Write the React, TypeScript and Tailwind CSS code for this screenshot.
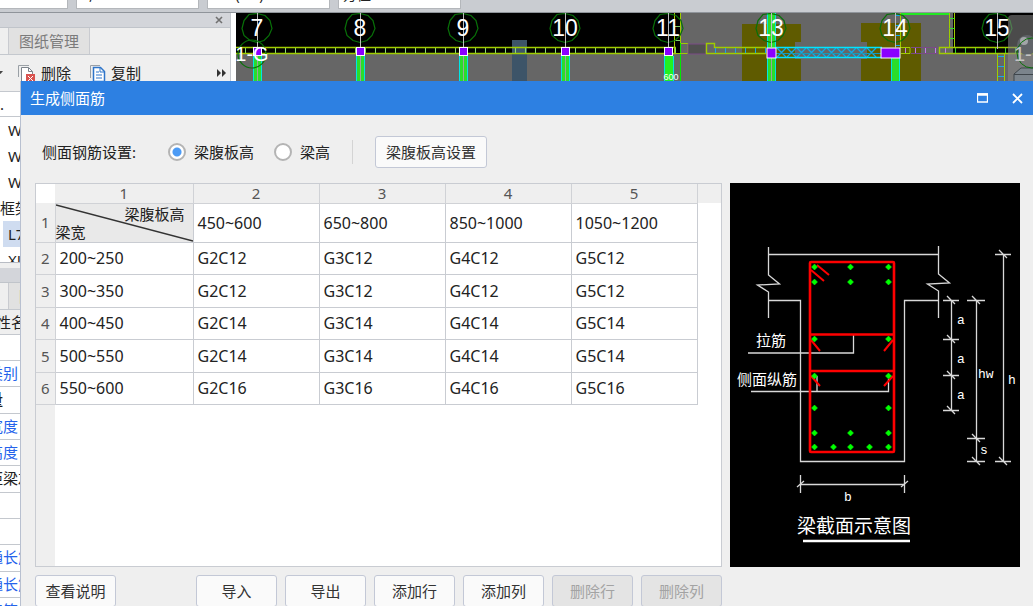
import { useState } from "react";

const ranges = ["450~600", "650~800", "850~1000", "1050~1200"];

const rows = [
  { width: "200~250", cells: ["G2C12", "G3C12", "G4C12", "G5C12"] },
  { width: "300~350", cells: ["G2C12", "G3C12", "G4C12", "G5C12"] },
  { width: "400~450", cells: ["G2C14", "G3C14", "G4C14", "G5C14"] },
  { width: "500~550", cells: ["G2C14", "G3C14", "G4C14", "G5C14"] },
  { width: "550~600", cells: ["G2C16", "G3C16", "G4C16", "G5C16"] },
];

const actions = [
  { label: "导入", disabled: false },
  { label: "导出", disabled: false },
  { label: "添加行", disabled: false },
  { label: "添加列", disabled: false },
  { label: "删除行", disabled: true },
  { label: "删除列", disabled: true },
];

const properties = [
  { name: "", style: "" },
  { name: "类别", style: "text-[#2563eb]" },
  { name: "量", style: "font-bold" },
  { name: "宽度", style: "text-[#2563eb]" },
  { name: "高度", style: "text-[#2563eb]" },
  { name: "距梁左", style: "" },
  { name: "", style: "" },
  { name: "", style: "" },
  { name: "通长筋", style: "text-[#2563eb]" },
  { name: "通长筋", style: "text-[#2563eb]" },
  { name: "选筋", style: "text-[#2563eb]" },
];

function TopBar() {
  return (
    <div className="flex h-[13px] shrink-0 items-start gap-2 overflow-hidden border-b border-[#8f949a] bg-[#c9ccd1]">
      <span className="h-[9px] w-[68px] border-r border-b border-[#b4b7bb] bg-white" />
      {["0,0", "LFC(OA)", "方值:"].map((value) => (
        <span
          key={value}
          className="flex h-[9px] w-[123px] items-end overflow-hidden border-x border-b border-[#b4b7bb] bg-white"
        >
          <input
            aria-label={value}
            defaultValue={value}
            className="h-6 w-full shrink-0 px-1 pb-1 text-[14px] leading-5 outline-none"
          />
        </span>
      ))}
    </div>
  );
}

function SidePanel() {
  return (
    <aside className="w-[231px] shrink-0 overflow-hidden border-r border-[#c4c8ce] bg-[#efefef]">
      <div className="flex h-[15px] items-center justify-end border-b border-[#c0c4ca] bg-[#d3d5da] pr-[7px]">
        <button aria-label="关闭面板" className="text-[#707070]">
          <svg width="8" height="8" viewBox="0 0 8 8">
            <path d="M1 1l6 6M7 1l-6 6" stroke="currentColor" strokeWidth="1.6" />
          </svg>
        </button>
      </div>
      <div className="flex h-[27px] border-b border-[#c4c8ce] pl-2">
        <button className="border-x border-[#c9cbd0] bg-[#e1e1e1] px-[10px] text-[#7b7b7b]">
          图纸管理
        </button>
      </div>
      <div className="flex h-[37px] items-center border-b border-[#c4c8ce] pr-1">
        <svg width="17" height="8" viewBox="0 0 17 8" className="shrink-0">
          <path d="M-2 2h5l-2.500 3z" fill="#444" />
        </svg>
        <button className="flex items-center gap-1">
          <svg width="20" height="20" viewBox="0 0 20 20" fill="none">
            <path d="M1.500 14V2.500H12" stroke="#9aa0a6" />
            <path d="M4.500 4.500h7l4 4v10h-11z" fill="#fff" stroke="#7d848c" />
            <path d="M11.500 4.500v4h4" stroke="#7d848c" />
            <rect x="9" y="11" width="9" height="9" fill="#d9534f" />
            <path d="M11 13l5 5M16 13l-5 5" stroke="#fff" />
          </svg>
          删除
        </button>
        <button className="ml-[18px] flex items-center gap-1">
          <svg width="18" height="20" viewBox="0 0 18 20" fill="none">
            <path d="M1.500 15V2.500H11" stroke="#9aa0a6" />
            <path
              d="M4.500 4.500h7l4 4v10h-11z"
              fill="#fff"
              stroke="#2f75c9"
              strokeWidth="1.500"
            />
            <path d="M11 4.500v4.500h4.500M7 9h3M7 12h6M7 15h6" stroke="#2f75c9" />
          </svg>
          复制
        </button>
        <svg width="9" height="8" viewBox="0 0 9 8" className="ml-auto">
          <path d="M0 0l4 4-4 4zM5 0l4 4-4 4z" fill="#333" />
        </svg>
      </div>

      <ul className="h-[171px] overflow-hidden border-b border-[#b8bcc4] bg-white">
        <li className="h-[25px] border-b border-[#c4c8ce] leading-6">.</li>
        <li className="h-[26px] pl-2 leading-[26px]">W</li>
        <li className="h-[26px] pl-2 leading-[26px]">W</li>
        <li className="h-[26px] pl-2 leading-[26px]">W</li>
        <li className="h-[26px] leading-[26px]">框架</li>
        <li className="ml-[3px] h-[26px] bg-[#cfdcf0] pl-[5px] leading-[26px]">L7</li>
        <li className="h-[26px] pl-2 leading-[26px]">XL</li>
      </ul>
      <div className="mt-[5px] h-[15px] border-b border-[#c0c4ca] bg-[#d3d5da]" />
      <div className="flex h-[27px] border-b border-[#c4c8ce] pl-2">
        <button className="border-x border-[#c9cbd0] bg-[#e1e1e1] px-[10px] text-[#b5762f]">
          图
        </button>
      </div>
      <div className="h-[25px] border-b border-[#c4c8ce] leading-6">
        <span className="-ml-1">性名</span>
      </div>
      <ul className="bg-white">
        {properties.map((p, i) => (
          <li
            key={i}
            className="h-[26px] border-b border-[#c4c8ce] leading-[25px] nth-[3n]:h-[27px]"
          >
            <span className={`-ml-3 ${p.style}`}>{p.name}</span>
          </li>
        ))}
      </ul>
    </aside>
  );
}

function AxisBubble({ x, label }: { x: number; label: string }) {
  return (
    <g>
      <path
        d={`M${x} 13.500l8 2 5 5 2 8-3 7-5 5-7 2-7-2-6-5-2-7 2-8 5-6z`}
        fill="none"
        stroke="#087008"
        strokeWidth="1.200"
      />
      <path d={`M${x + 0.5} 13v36`} stroke="#bdbdbd" />
      <text x={x} y="36" textAnchor="middle" fontSize="23" fill="#fff">
        {label}
      </text>
    </g>
  );
}

function Column({ x }: { x: number }) {
  return (
    <g>
      <rect x={x - 4} y="56" width="9" height="30" fill="#2bdc2b" />
      <path d={`M${x - 3.5} 56v30M${x + 4.5} 56v30`} stroke="#00e5e5" />
      <path d={`M${x + 0.5} 56v30`} stroke="#9aa59a" />
      <rect x={x - 3.5} y="47.500" width="8" height="8" fill="#8a00ff" stroke="#fff" />
    </g>
  );
}

function PlanCanvas() {
  return (
    <svg
      className="h-[68px] min-w-0 flex-1 bg-[#666]"
      viewBox="236 13 797 68"
      preserveAspectRatio="xMinYMin slice"
      fontFamily='"Liberation Sans", sans-serif'
    >
      <rect x="236" y="13" width="444" height="40" fill="#000" />
      <rect x="953" y="13" width="80" height="40" fill="#000" />
      <rect x="512" y="40" width="15" height="41" fill="#3d5468" />
      <path
        d="M742 24h59v18h-6v17h6v22h-59zM861 23h60v58h-60V59h6V42h-6z"
        fill="#5f5b00"
      />
      <path
        d="M245 50.500H676"
        stroke="#86e070"
        strokeWidth="5"
        strokeDasharray="1 9"
      />
      <path d="M236 47.500H676M236 53.500H676" stroke="#a0cc00" strokeWidth="1.400" />

      <path d="M674.500 13v40M680.500 13v30" stroke="#a0cc00" />
      <path d="M675 26.500h5M675 40.500h5" stroke="#7fd06a" />
      <path d="M680.500 43v38" stroke="#00e800" />
      <path d="M681 43.500h7v10h-16" fill="none" stroke="#a0cc00" />
      <rect x="688" y="44" width="18" height="10" fill="#505050" stroke="#7a4a86" />
      <path
        d="M766 53.500H706.500V43.500h8v4H766"
        fill="none"
        stroke="#a0cc00"
        strokeWidth="1.400"
      />
      <path
        d="M715 50.500H766"
        stroke="#12a8e8"
        strokeWidth="5"
        strokeDasharray="1 9"
      />

      {Array.from({ length: 10 }, (_, i) => (
        <path
          key={i}
          d={`M${777 + i * 10} 48l9 9M${786 + i * 10} 48l-9 9`}
          stroke="#12a8e8"
          strokeWidth="1.300"
        />
      ))}
      <path d="M776 53.500H882" stroke="#159ab8" />
      <path d="M776 47.500H882M776 57.500H882" stroke="#00e5ff" strokeWidth="1.400" />
      <rect x="767" y="13" width="9" height="68" fill="#2bdc2b" />
      <path d="M767.500 13v68M775.500 13v68" stroke="#00e5e5" />
      <path d="M771.500 13v68" stroke="#9aa59a" />
      <rect x="767" y="48" width="9" height="10" fill="#8a00ff" stroke="#fff" />
      <path d="M900.500 13v35" stroke="#a0cc00" />
      <path d="M898 15v32" stroke="#12a8e8" strokeDasharray="1 9" strokeWidth="4" />
      <rect x="891" y="58" width="9" height="23" fill="#2bdc2b" />
      <path d="M891.500 58v23M899.500 58v23" stroke="#00e5e5" />
      <rect x="881" y="48" width="19" height="10" fill="#8a00ff" stroke="#fff" />
      <path d="M901 14h49" stroke="#22e822" strokeWidth="2" />
      <path d="M949.500 13v34M954.500 13v34" stroke="#a0cc00" />
      <path d="M952 18v30" stroke="#2bdc2b" strokeDasharray="1 9" strokeWidth="5" />
      <path d="M901 47.500h9v6h-9" fill="none" stroke="#a0cc00" />
      <path d="M911 47.500h27M911 53.500h27" stroke="#7a4a86" />
      <path d="M905 50.500h42" stroke="#c07af0" strokeWidth="5" strokeDasharray="1 9" />
      <path d="M955 50.500h78" stroke="#2bdc2b" strokeWidth="5" strokeDasharray="1 9" />
      <path
        d="M1033 47.500H939.500v6H1033"
        fill="none"
        stroke="#a0cc00"
        strokeWidth="1.400"
      />
      <path d="M997.500 54v27M1004.500 54v27" stroke="#a0cc00" />
      <path d="M998 56.500h6M998 66.500h6M998 76.500h6" stroke="#12a8e8" />

      <AxisBubble x={257} label="7" />
      <AxisBubble x={360} label="8" />
      <AxisBubble x={463} label="9" />
      <AxisBubble x={565} label="10" />
      <AxisBubble x={668} label="11" />
      <AxisBubble x={771} label="13" />
      <AxisBubble x={895} label="14" />
      <AxisBubble x={997} label="15" />
      <Column x={257} />
      <Column x={360} />
      <Column x={463} />
      <Column x={565} />
      <rect x="664" y="56" width="10" height="30" fill="#22f022" />
      <path d="M664.500 56v30M673.500 56v30" stroke="#00e5e5" />
      <rect x="664.500" y="47.500" width="8" height="8" fill="#8a00ff" stroke="#fff" />
      <circle cx="252" cy="54" r="14" fill="none" stroke="#087008" strokeWidth="1.200" />
      <text x="252" y="61" textAnchor="middle" fontSize="20" fill="#fff">
        1-G
      </text>
      <text x="671" y="80" textAnchor="middle" fontSize="9" fill="#fff">
        600
      </text>

      <rect x="1008" y="15" width="40" height="70" rx="4" fill="#888" fillOpacity="0.55" />
      <circle cx="1027" cy="45" r="10" fill="#606468" />
      <circle cx="1024" cy="41" r="4" fill="#a2a5a8" />
      <path d="M1014 74l7-6h14v16h-21z" fill="#7b848c" stroke="#3f464c" />
      <path d="M1014 74.500h20" stroke="#3f464c" />
      <circle cx="1032" cy="53" r="15" fill="none" stroke="#087008" />
      <text x="1014" y="61" fontSize="20" fill="#c4c4c4">
        1-
      </text>
    </svg>
  );
}

const rebars = [
  [814, 267], [850, 267], [888, 267],
  [814, 282], [850, 282], [888, 282],
  [814, 339], [888, 339],
  [814, 376], [888, 376],
  [814, 408], [888, 408],
  [814, 433], [850, 433], [888, 433],
  [814, 447], [833, 447], [850, 447], [869, 447], [888, 447],
];

// dimension ticks: x, y, half width
const ticks = [
  [1003, 254, 8],
  [951, 300, 8], [951, 339, 8], [951, 375, 8], [951, 410, 8],
  [976, 300, 9], [976, 438, 9], [976, 461, 9],
  [1003, 461, 8],
];

function SectionDiagram() {
  return (
    <svg
      role="img"
      aria-label="梁截面示意图"
      className="h-[384px] w-[290px] shrink-0 bg-black"
      viewBox="730 183 290 384"
      fontFamily='"Noto Sans CJK SC", sans-serif'
      fill="#fff"
    >
      <g fill="none" stroke="#d8d8d8" strokeWidth="1.300">
        <path d="M768 254.500H938" />
        <path d="M768.500 247v28l11 9-22 1 11 7v26" />
        <path d="M938.500 246v28l11 9-22 1 11 7v27" />
        <path d="M768 300.500h32.500V461.500H904.500V300.500H938" />
        <path d="M748 353H853.500V335" />
        <path d="M751 391.500H888.500V379M817 391.500V376" />
        <path d="M951.500 300V410M976.500 300V461M1003.500 254V461" />
        <path d="M800.500 475v18M904.500 475v18M800 484.500H904" />
        <path d="M797 487l7-6M901 487l7-6" />
        {ticks.map(([x, y, w]) => (
          <path key={`${x}-${y}`} d={`M${x - w} ${y + 0.5}h${w * 2}M${x - 4} ${y - 4}l8 8`} />
        ))}
      </g>
      <g fill="none" stroke="#f00" strokeWidth="2.600">
        <rect x="810" y="262" width="84" height="190" rx="1" />
        <path d="M810 334.500h84M810 371h84" />
        <path
          d="M817 265l12 10M811 270l13 11M811 340l9 11M893 340l-9 11M811 376l9 10M893 376l-9 10"
          strokeWidth="2"
        />
      </g>
      {rebars.map(([x, y]) => (
        <path key={`${x}-${y}`} d={`M${x + 0.5} ${y - 3}l3 3-3 3-3-3z`} fill="#0f0" stroke="#0f0" strokeWidth="0.500" />
      ))}
      <text x="756" y="346" fontSize="15">拉筋</text>
      <text x="737" y="385" fontSize="15">侧面纵筋</text>
      <g fontFamily='"Liberation Mono", monospace' fontSize="13">
        <text x="957" y="324">a</text>
        <text x="957" y="363">a</text>
        <text x="957" y="399">a</text>
        <text x="978" y="378">hw</text>
        <text x="1008" y="384">h</text>
        <text x="980" y="454">s</text>
        <text x="844" y="501">b</text>
      </g>
      <text x="797" y="533" fontSize="19">梁截面示意图</text>
      <path d="M803 541h107" stroke="#fff" strokeWidth="2.400" />
    </svg>
  );
}

function RebarTable() {
  return (
    <div className="flex min-h-0 flex-1 flex-col border border-[#c9ccd2] bg-white">
      <table className="w-full table-fixed border-collapse text-left text-[16px] text-[#222]">
        <colgroup>
          <col className="w-[19px]" />
          <col className="w-[138px]" />
          <col />
          <col />
          <col />
          <col />
          <col className="w-6" />
        </colgroup>
        <thead>
          <tr className="h-[19px] bg-[#efefef] text-center text-[15px] leading-[18px] text-[#555]">
            <td className="bg-white p-0" />
            {[1, 2, 3, 4, 5].map((n) => (
              <th
                key={n}
                scope="col"
                className="border-r border-b border-[#d0d2d6] p-0 font-normal"
              >
                {n}
              </th>
            ))}
            <td />
          </tr>
        </thead>
        <tbody>
          <tr className="h-[39px]">
            <th className="border-r border-b border-[#d0d2d6] bg-[#efefef] p-0 text-center text-[15px] font-normal text-[#555]">
              1
            </th>
            <td className="relative border-r border-b border-[#c9ccd2] bg-[#e9e9e9] p-0 text-[15px] leading-[18px]">
              <svg
                className="absolute inset-0 h-full w-full"
                viewBox="0 0 138 39"
                preserveAspectRatio="none"
              >
                <path d="M0 1L138 38" stroke="#333" strokeWidth="1.300" />
              </svg>
              <span className="relative block pr-2 text-right">梁腹板高</span>
              <span className="relative block">梁宽</span>
            </td>
            {ranges.map((r) => (
              <td key={r} className="border-r border-b border-[#c9ccd2] px-1 py-0">
                {r}
              </td>
            ))}
            <td />
          </tr>
          {rows.map((row, i) => (
            <tr key={row.width} className="h-[33px] even:h-8">
              <th className="border-r border-b border-[#d0d2d6] bg-[#efefef] p-0 text-center text-[15px] font-normal text-[#555]">
                {i + 2}
              </th>
              <td className="border-r border-b border-[#c9ccd2] px-1 py-0">{row.width}</td>
              {row.cells.map((cell) => (
                <td key={cell} className="border-r border-b border-[#c9ccd2] px-1 py-0">
                  {cell}
                </td>
              ))}
              <td />
            </tr>
          ))}
        </tbody>
      </table>
      <div className="w-[19px] flex-1 bg-[#efefef]" />
    </div>
  );
}

const buttonClass =
  "h-8 rounded-[3px] border border-[#c3c8d6] bg-[#fafafa] text-[#333] disabled:bg-[#e4e4e4] disabled:text-[#a3a3a3]";

function RebarDialog() {
  const [mode, setMode] = useState("web");

  const radioClass =
    "size-[18px] appearance-none rounded-full border-2 border-[#b4b4b4] bg-white checked:bg-[radial-gradient(circle,#4c9bf5_4px,#fff_5px)]";

  return (
    <section
      role="dialog"
      aria-label="生成侧面筋"
      className="absolute top-[81px] right-0 -bottom-px left-5 flex flex-col border-l border-[#b8c0d0] bg-[#efefef]"
    >
      <header className="flex h-[34px] shrink-0 items-center bg-[#2d80e2] pr-[10px] pl-[9px] text-white">
        <h1>生成侧面筋</h1>
        <button aria-label="最大化" className="ml-auto">
          <svg width="11" height="10" viewBox="0 0 11 10" fill="none" stroke="#fff">
            <path d="M.5 1h10v8H.5z" strokeWidth="1.300" />
            <path d="M0 1.500h11" strokeWidth="2.500" />
          </svg>
        </button>
        <button aria-label="关闭" className="ml-6">
          <svg width="11" height="11" viewBox="0 0 11 11" stroke="#fff" strokeWidth="1.800">
            <path d="M1 1l9 9M10 1l-9 9" />
          </svg>
        </button>
      </header>

      <div className="flex min-h-0 flex-1 flex-col pt-5 pr-[13px] pl-[14px]">
        <div className="flex h-[34px] shrink-0 items-center pl-[7px]">
          <span className="w-[126px]">侧面钢筋设置:</span>
          <label className="flex items-center gap-2">
            <input
              type="radio"
              name="mode"
              className={radioClass}
              checked={mode === "web"}
              onChange={() => setMode("web")}
            />
            梁腹板高
          </label>
          <label className="ml-5 flex items-center gap-2">
            <input
              type="radio"
              name="mode"
              className={radioClass}
              checked={mode === "beam"}
              onChange={() => setMode("beam")}
            />
            梁高
          </label>
          <span className="mx-[22px] h-6 w-px bg-[#d4d4d4]" />
          <button className={`${buttonClass} px-[10px]`}>梁腹板高设置</button>
        </div>

        <div className="mt-[14px] flex min-h-0 flex-1 gap-2">
          <div className="flex min-w-0 flex-1 flex-col gap-2">
            <RebarTable />
            <div className="flex shrink-0 gap-2">
              <button className={`${buttonClass} mr-auto w-[81px]`}>查看说明</button>
              {actions.map((a) => (
                <button
                  key={a.label}
                  disabled={a.disabled}
                  className={`${buttonClass} w-[81px]`}
                >
                  {a.label}
                </button>
              ))}
            </div>
          </div>
          <SectionDiagram />
        </div>
      </div>
    </section>
  );
}

export default function App() {
  return (
    <div className="relative flex h-screen flex-col overflow-hidden bg-white font-['Noto_Sans','Noto_Sans_CJK_SC',sans-serif] text-[15px] leading-5 text-[#222]">
      <TopBar />
      <div className="flex min-h-0 flex-1 gap-[5px]">
        <SidePanel />
        <PlanCanvas />
      </div>
      <RebarDialog />
    </div>
  );
}
